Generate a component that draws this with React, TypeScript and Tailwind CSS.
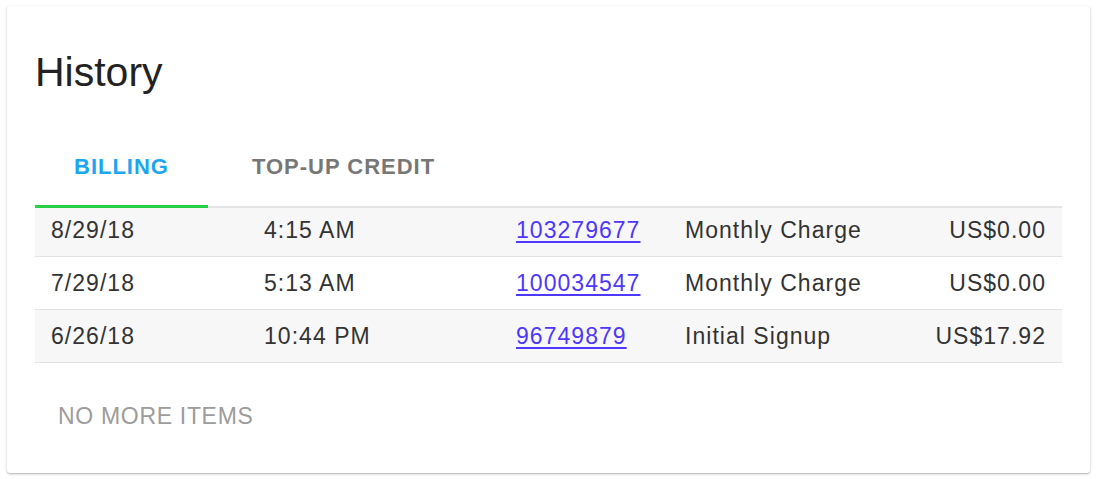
type BillingRow = {
  date: string;
  time: string;
  invoice: string;
  description: string;
  amount: string;
};

const ROWS: BillingRow[] = [
  { date: "8/29/18", time: "4:15 AM", invoice: "103279677", description: "Monthly Charge", amount: "US$0.00" },
  { date: "7/29/18", time: "5:13 AM", invoice: "100034547", description: "Monthly Charge", amount: "US$0.00" },
  { date: "6/26/18", time: "10:44 PM", invoice: "96749879", description: "Initial Signup", amount: "US$17.92" },
];

const TABS = ["BILLING", "TOP-UP CREDIT"];

export default function App() {
  return (
    <div className="min-h-screen bg-white pl-[7px] pt-[6px] font-['Liberation_Sans',Arial,sans-serif]">
      <div className="flex h-[467px] w-[1083px] flex-col rounded-[3px] bg-white px-[28px] pt-[46px] shadow-[0_1px_3px_rgba(0,0,0,0.22),0_1px_1px_rgba(0,0,0,0.12)]">
        <h2 className="text-[41px] leading-[41px] font-normal text-[#222]">History</h2>

        <div className="mt-[41px] flex border-b-2 border-[#e4e4e4]">
          {TABS.map((tab, i) => (
            <div
              key={tab}
              className={
                i === 0
                  ? "-mb-[2px] border-b-[3px] border-[#26cf45] px-[39px] pt-[22px] pb-[27px] text-[22px] leading-[22px] font-bold tracking-[0.045em] text-[#1ba6f0]"
                  : "-mb-[2px] border-b-[3px] border-transparent px-[44px] pt-[22px] pb-[27px] text-[22px] leading-[22px] font-bold tracking-[0.045em] text-[#777]"
              }
            >
              {tab}
            </div>
          ))}
        </div>

        <div className="flex flex-col text-[23px] tracking-[0.045em] text-[#333]">
          {ROWS.map((row, i) => (
            <div
              key={row.invoice}
              className={
                "grid grid-cols-[213px_252px_169px_1fr_auto] items-center border-b border-[#e2e2e2] pr-[16px] pl-[16px] " +
                (i === 0 ? "h-[49px] pb-[3px] " : "h-[53px] ") +
                (i % 2 === 0 ? "bg-[#f7f7f7]" : "bg-white")
              }
            >
              <span>{row.date}</span>
              <span>{row.time}</span>
              <a href="#" className="text-[#4d38fb] underline underline-offset-[3px]">
                {row.invoice}
              </a>
              <span>{row.description}</span>
              <span className="text-right">{row.amount}</span>
            </div>
          ))}
        </div>

        <div className="mt-[42px] pl-[23px] text-[23px] leading-[23px] tracking-[0.03em] text-[#9c9c9c]">
          NO MORE ITEMS
        </div>
      </div>
    </div>
  );
}
